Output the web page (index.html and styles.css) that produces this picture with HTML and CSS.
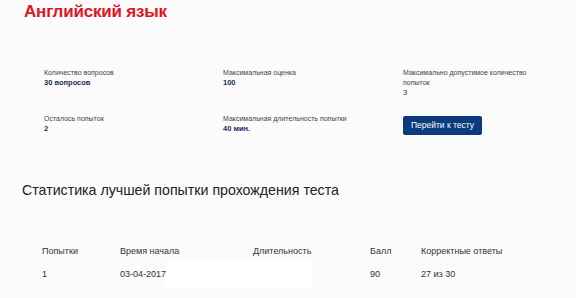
FILE: index.html
```html
<!DOCTYPE html>
<html lang="ru">
<head>
<meta charset="utf-8">
<link rel="stylesheet" href="styles.css">
</head>
<body>
<h1 class="title">Английский язык</h1>
<div class="info">
  <div class="cell">
    <div class="label">Количество вопросов</div>
    <div class="value">30 вопросов</div>
  </div>
  <div class="cell">
    <div class="label">Максимальная оценка</div>
    <div class="value">100</div>
  </div>
  <div class="cell">
    <div class="label">Максимально допустимое количество попыток</div>
    <div class="value plain">3</div>
  </div>
  <div class="cell">
    <div class="label">Осталось попыток</div>
    <div class="value">2</div>
  </div>
  <div class="cell">
    <div class="label">Максимальная длительность попытки</div>
    <div class="value">40 мин.</div>
  </div>
  <div class="cell">
    <button class="btn">Перейти к тесту</button>
  </div>
</div>
<h2 class="subtitle">Статистика лучшей попытки прохождения теста</h2>
<table class="stats">
  <thead>
    <tr><th>Попытки</th><th>Время начала</th><th>Длительность</th><th>Балл</th><th>Корректные ответы</th></tr>
  </thead>
  <tbody>
    <tr><td>1</td><td>03-04-2017</td><td><span class="redact"></span></td><td>90</td><td>27 из 30</td></tr>
  </tbody>
</table>
</body>
</html>
```
FILE: styles.css
```css
html, body {
  margin: 0;
  padding: 0;
  background: #fbfbfb;
  font-family: "Liberation Sans", Arial, sans-serif;
  color: #222;
}
.title {
  margin: 0;
  padding: 2px 0 0 24px;
  font-size: 17px;
  line-height: 20px;
  font-weight: bold;
  color: #e2131d;
  letter-spacing: -0.2px;
}
.info {
  display: grid;
  grid-template-columns: 179px 180px 130px;
  row-gap: 16px;
  padding: 46px 0 0 44px;
}
.label {
  font-size: 7px;
  line-height: 10px;
  color: #444;
}
.value {
  font-size: 7.5px;
  line-height: 10px;
  font-weight: bold;
  color: #1b2d5e;
}
.value.plain {
  font-weight: normal;
  color: #333;
}
.btn {
  width: 79px;
  height: 19px;
  border: 0;
  border-radius: 2px;
  background: #0b3a7d;
  color: #fff;
  font-family: "Liberation Sans", Arial, sans-serif;
  font-size: 8.5px;
  padding: 0;
  cursor: pointer;
}
.subtitle {
  margin: 0;
  padding: 46px 0 0 22px;
  font-size: 14.2px;
  line-height: 18px;
  font-weight: normal;
  color: #222;
}
.stats {
  border-collapse: collapse;
  margin: 47px 0 0 42px;
  font-size: 9px;
  color: #333;
}
.stats th, .stats td {
  text-align: left;
  font-weight: normal;
  padding: 0;
  vertical-align: top;
}
.stats th {
  height: 23px;
  line-height: 10px;
}
.stats td {
  line-height: 10px;
  height: 14px;
}
.stats th:nth-child(1) { width: 78px; }
.stats th:nth-child(2) { width: 133px; }
.stats th:nth-child(3) { width: 117px; }
.stats th:nth-child(4) { width: 51px; }
.stats th:nth-child(5) { width: 120px; }
.redact {
  display: block;
  width: 147px;
  height: 26px;
  margin: -8px 0 0 -88px;
  background: #fff;
}
```
